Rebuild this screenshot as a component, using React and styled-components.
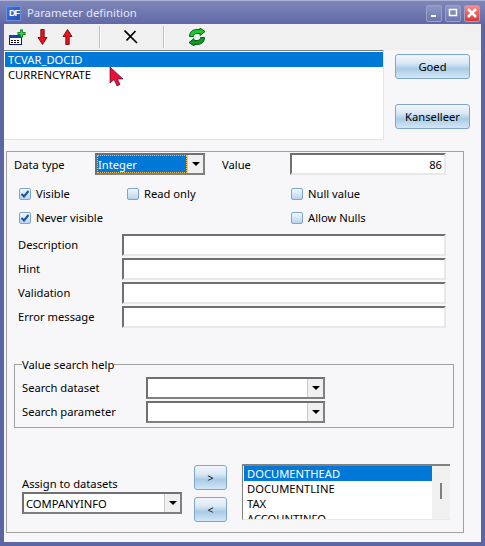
import styled, { createGlobalStyle } from "styled-components";

const GlobalStyle = createGlobalStyle`
  html, body { margin: 0; padding: 0; background: #5c66a3; }
  * { box-sizing: border-box; }
`;

const Window = styled.div`
  position: relative;
  display: flex;
  flex-direction: column;
  width: 485px;
  height: 546px;
  padding: 0 4px 4px;
  background: #5c66a3;
  font-family: "Noto Sans", sans-serif;
  font-size: 11.2px;
  line-height: 16px;
  color: #000;
  overflow: hidden;
`;

const TitleBar = styled.div`
  display: flex;
  align-items: center;
  height: 24px;
  flex: none;
  margin: 0 -4px;
  padding: 1px 5px 0 6px;
  background: linear-gradient(#7f87b9, #6069a6);
  border-top: 1px solid #aab0d6;
`;

const AppIcon = styled.div`
  width: 15px;
  height: 15px;
  margin-right: 6px;
  background: linear-gradient(135deg, #3f74d8, #2a4fb0);
  border: 1px solid #6f8fe0;
  color: #fff;
  font: bold 9px/13px "Liberation Sans", sans-serif;
  text-align: right;
  letter-spacing: -1px;
  padding-right: 1px;
`;

const TitleText = styled.div`
  flex: 1;
  color: #e4e6f2;
  font-size: 11.3px;
`;

const CaptionButton = styled.div`
  display: flex;
  align-items: center;
  justify-content: center;
  width: 16px;
  height: 17px;
  margin-left: 3px;
  border: 1px solid #9aa0c8;
  border-radius: 2px;
  background: ${(p) => (p.$close ? "linear-gradient(#f88, #d83a34)" : "linear-gradient(#8f96c4, #6d76ae)")};
`;

const Toolbar = styled.div`
  display: flex;
  align-items: center;
  height: 26px;
  flex: none;
  background: #f0f0f0;
`;

const Tool = styled.div`
  display: flex;
  align-items: center;
  justify-content: center;
  width: ${(p) => p.$w}px;
`;

const Separator = styled.div`
  width: 2px;
  height: 22px;
  background: #c0c0c0;
  border-right: 1px solid #fff;
`;

const Body = styled.div`
  flex: 1;
  display: flex;
  flex-direction: column;
  background: #f7f7fa;
`;

const TopRow = styled.div`
  display: flex;
  height: 90px;
  flex: none;
`;

const ParamList = styled.div`
  width: 380px;
  padding: 1px 0 0 1px;
  background: #fff;
  border-top: 1px solid #808080;
  border-bottom: 1px solid #e4e4e4;
  border-right: 1px solid #e4e4e4;
`;

const ListRow = styled.div`
  height: 15px;
  line-height: 16px;
  padding-left: 3px;
  white-space: nowrap;
  overflow: hidden;
  background: ${(p) => (p.$selected ? "#0078d7" : "transparent")};
  color: ${(p) => (p.$selected ? "#fff" : "#000")};
`;

const SideButtons = styled.div`
  display: flex;
  flex-direction: column;
  gap: 25px;
  padding: 4px 0 0 11px;
`;

const AquaButton = styled.div`
  display: flex;
  align-items: center;
  justify-content: center;
  width: ${(p) => p.$w}px;
  height: 25px;
  border: 1px solid #7ea4d2;
  border-radius: 3px;
  background: linear-gradient(#f2f7fc, #dbe8f5 35%, #a9cce6 60%, #d4e6f5);
`;

const Panel = styled.div`
  display: flex;
  flex-direction: column;
  width: 458px;
  height: 382px;
  margin: 11px 0 0 2px;
  padding: 1px 0 0 7px;
  border: 1px solid #a0a0a0;
`;

const TopFields = styled.div`
  display: flex;
  align-items: center;
  height: 22px;
`;

const Label = styled.div`
  width: ${(p) => p.$w}px;
  flex: none;
  white-space: nowrap;
`;

const RowLabel = styled(Label)`
  padding-top: 2px;
  margin-left: ${(p) => p.$left || 0}px;
`;

const sunken = `
  background: #fff;
  border: 2px solid #e8e8e8;
  border-top-color: #707070;
  border-left-color: #707070;
`;

const ValueInput = styled.div`
  ${sunken}
  width: 156px;
  height: 22px;
  padding: 1px 2px;
  text-align: right;
  line-height: 17px;
`;

const ComboBox = styled.div`
  ${sunken}
  display: flex;
  width: ${(p) => p.$w}px;
  height: 22px;
  flex: none;
  border-right-color: #808080;
  border-bottom-color: #808080;
`;

const ComboText = styled.div`
  flex: 1;
  padding-left: ${(p) => (p.$selected ? "1px" : "2px")};
  line-height: 20px;
  white-space: nowrap;
  background: ${(p) => (p.$selected ? "#0078d7" : "#fff")};
  color: ${(p) => (p.$selected ? "#fff" : "#000")};
  outline: ${(p) => (p.$selected ? "1px dotted #e8c060" : "none")};
  outline-offset: -1px;
`;

const ComboArrow = styled.div`
  display: flex;
  align-items: center;
  justify-content: center;
  width: 16px;
  background: #f0f0f0;
  border-left: 1px solid #c8c8c8;
  &::after {
    content: "";
    border-left: 4px solid transparent;
    border-right: 4px solid transparent;
    border-top: 4px solid #000;
  }
`;

const CheckGrid = styled.div`
  display: grid;
  grid-template-columns: 108px 164px auto;
  grid-auto-rows: 24px;
  align-items: center;
  margin: 7px 0 4px 5px;
`;

const CheckItem = styled.div`
  display: flex;
  align-items: center;
  gap: 5px;
  white-space: nowrap;
`;

const CheckBox = styled.div`
  display: flex;
  align-items: center;
  justify-content: center;
  width: 12px;
  height: 12px;
  border: 1px solid #7ea4d2;
  border-radius: 2px;
  background: linear-gradient(#f0f6fc, #d6e6f5 50%, #b8d4ee);
`;

const Fields = styled.div`
  display: grid;
  grid-template-columns: 104px 324px;
  grid-auto-rows: 22px;
  row-gap: 2px;
  align-items: center;
  margin-left: 4px;
`;

const TextInput = styled.div`
  ${sunken}
  height: 22px;
`;

const GroupBox = styled.fieldset`
  width: 440px;
  height: 72px;
  margin: 28px 0 0 0;
  padding: 5px 0 0 7px;
  border: 1px solid #a0a0a0;
  min-width: 0;
`;

const GroupLegend = styled.legend`
  margin-left: 0;
  padding: 2px 0 0;
  font-size: 11.2px;
  line-height: 14px;
`;

const SearchRow = styled.div`
  display: flex;
  align-items: center;
  margin-bottom: 2px;
`;

const BottomRow = styled.div`
  display: flex;
  margin: 36px 0 0 8px;
`;

const AssignColumn = styled.div`
  display: flex;
  flex-direction: column;
  width: 172px;
  padding-top: 10px;
`;

const ArrowColumn = styled.div`
  display: flex;
  flex-direction: column;
  gap: 7px;
  width: 48px;
  padding-top: 1px;
  font-size: 10.5px;
`;

const DatasetList = styled.div`
  display: flex;
  width: 208px;
  height: 56px;
  padding-left: 1px;
  background: #fff;
  border-top: 2px solid #808080;
  border-left: 1px solid #808080;
  border-bottom: 1px solid #e8e8e8;
  overflow: hidden;
`;

const DatasetRows = styled.div`
  flex: 1;
  min-width: 0;
`;

const ScrollBar = styled.div`
  display: flex;
  justify-content: center;
  width: 18px;
  background: #f0f0f0;
  padding-top: 17px;
  &::after {
    content: "";
    width: 2px;
    height: 16px;
    background: #808080;
  }
`;

const Pointer = styled.svg`
  position: absolute;
  left: 109px;
  top: 66px;
`;

const AddIcon = () => (
  <svg width="18" height="16" viewBox="0 0 18 16">
    <rect x="1.5" y="6.5" width="12" height="9" fill="#fff" stroke="#0a1a80" />
    <rect x="1" y="6" width="13" height="3" fill="#1a3cc0" />
    <path d="M3 11.5h2M6 11.5h2M9 11.5h2M3 13.5h2M6 13.5h2M9 13.5h2" stroke="#000" />
    <path d="M9.5 4.5h8M13.5 .5v8" stroke="#0a6a20" strokeWidth="3" />
    <path d="M10.3 4.5h6.4M13.5 1.3v6.4" stroke="#30e040" strokeWidth="1.6" />
  </svg>
);

const ArrowIcon = ({ up }) => (
  <svg width="11" height="16" viewBox="0 0 11 16">
    <path
      d={up ? "M5.5 .5L10 7.5H7.2V15.5H3.8V7.5H1Z" : "M3.8 .5H7.2V8.5H10L5.5 15.5 1 8.5H3.8Z"}
      fill="#ee101c"
      stroke="#500"
      strokeWidth="0.8"
    />
  </svg>
);

const DeleteIcon = () => (
  <svg width="14" height="14" viewBox="0 0 14 14">
    <path d="M.5 .5L13 13M11.5 1L2.5 10.5" stroke="#000" strokeWidth="1.7" />
  </svg>
);

const RefreshIcon = () => (
  <svg width="18" height="18" viewBox="0 0 18 18">
    <path
      d="M1.5 8.5C1.5 3.5 5 1.5 9 1.5H12V0L17 3.5 12 7.5V5.5H9C7 5.5 5.5 6.5 5.5 8.5Z"
      fill="#1cc82c"
      stroke="#04601a"
    />
    <path
      d="M16.5 9.5C16.5 14.5 13 16.5 9 16.5H6V18L1 14.5 6 10.5V12.5H9C11 12.5 12.5 11.5 12.5 9.5Z"
      fill="#0c9a20"
      stroke="#04601a"
    />
  </svg>
);

const Check = ({ label, checked }) => (
  <CheckItem>
    <CheckBox>
      {checked && (
        <svg width="10" height="10" viewBox="0 0 10 10" fill="none">
          <path d="M1.5 5L4 7.5 8.5 2" stroke="#1d4f9c" strokeWidth="2" />
        </svg>
      )}
    </CheckBox>
    {label}
  </CheckItem>
);

const Combo = ({ w, text, selected }) => (
  <ComboBox $w={w}>
    <ComboText $selected={selected}>{text}</ComboText>
    <ComboArrow />
  </ComboBox>
);

export default function App() {
  return (
    <Window>
      <GlobalStyle />
      <TitleBar>
        <AppIcon>DF</AppIcon>
        <TitleText>Parameter definition</TitleText>
        <CaptionButton>
          <svg width="8" height="8"><rect x="1" y="6" width="5" height="2" fill="#fff" /></svg>
        </CaptionButton>
        <CaptionButton>
          <svg width="10" height="10"><rect x="1.5" y="1.5" width="7" height="6" fill="none" stroke="#fff" strokeWidth="1.5" /></svg>
        </CaptionButton>
        <CaptionButton $close>
          <svg width="10" height="10"><path d="M1 1L9 9M9 1L1 9" stroke="#fff" strokeWidth="2.5" /></svg>
        </CaptionButton>
      </TitleBar>
      <Toolbar>
        <Tool $w={25}><AddIcon /></Tool>
        <Tool $w={26}><ArrowIcon /></Tool>
        <Tool $w={24}><ArrowIcon up /></Tool>
        <Tool $w={20} />
        <Separator />
        <Tool $w={60}><DeleteIcon /></Tool>
        <Tool $w={2} />
        <Separator />
        <Tool $w={64}><RefreshIcon /></Tool>
      </Toolbar>
      <Body>
        <TopRow>
          <ParamList>
            <ListRow $selected>TCVAR_DOCID</ListRow>
            <ListRow>CURRENCYRATE</ListRow>
          </ParamList>
          <SideButtons>
            <AquaButton $w={75}>Goed</AquaButton>
            <AquaButton $w={75}>Kanselleer</AquaButton>
          </SideButtons>
        </TopRow>
        <Panel>
          <TopFields>
            <RowLabel $w={81}>Data type</RowLabel>
            <Combo w={110} text="Integer" selected />
            <RowLabel $w={68} $left={17}>Value</RowLabel>
            <ValueInput>86</ValueInput>
          </TopFields>
          <CheckGrid>
            <Check label="Visible" checked />
            <Check label="Read only" />
            <Check label="Null value" />
            <Check label="Never visible" checked />
            <span />
            <Check label="Allow Nulls" />
          </CheckGrid>
          <Fields>
            <Label>Description</Label>
            <TextInput />
            <Label>Hint</Label>
            <TextInput />
            <Label>Validation</Label>
            <TextInput />
            <Label>Error message</Label>
            <TextInput />
          </Fields>
          <GroupBox>
            <GroupLegend>Value search help</GroupLegend>
            <SearchRow>
              <Label $w={124}>Search dataset</Label>
              <Combo w={179} />
            </SearchRow>
            <SearchRow>
              <Label $w={124}>Search parameter</Label>
              <Combo w={179} />
            </SearchRow>
          </GroupBox>
          <BottomRow>
            <AssignColumn>
              <RowLabel>Assign to datasets</RowLabel>
              <Combo w={160} text="COMPANYINFO" />
            </AssignColumn>
            <ArrowColumn>
              <AquaButton $w={33}>&gt;</AquaButton>
              <AquaButton $w={33}>&lt;</AquaButton>
            </ArrowColumn>
            <DatasetList>
              <DatasetRows>
                <ListRow $selected>DOCUMENTHEAD</ListRow>
                <ListRow>DOCUMENTLINE</ListRow>
                <ListRow>TAX</ListRow>
                <ListRow>ACCOUNTINFO</ListRow>
              </DatasetRows>
              <ScrollBar />
            </DatasetList>
          </BottomRow>
        </Panel>
      </Body>
      <Pointer width="15" height="21" viewBox="0 0 15 21">
        <path d="M1 1V17L5 13.5 8 20 11 18.5 8.5 13H14Z" fill="#e8103c" stroke="#3a0010" strokeWidth="0.6" />
      </Pointer>
    </Window>
  );
}
